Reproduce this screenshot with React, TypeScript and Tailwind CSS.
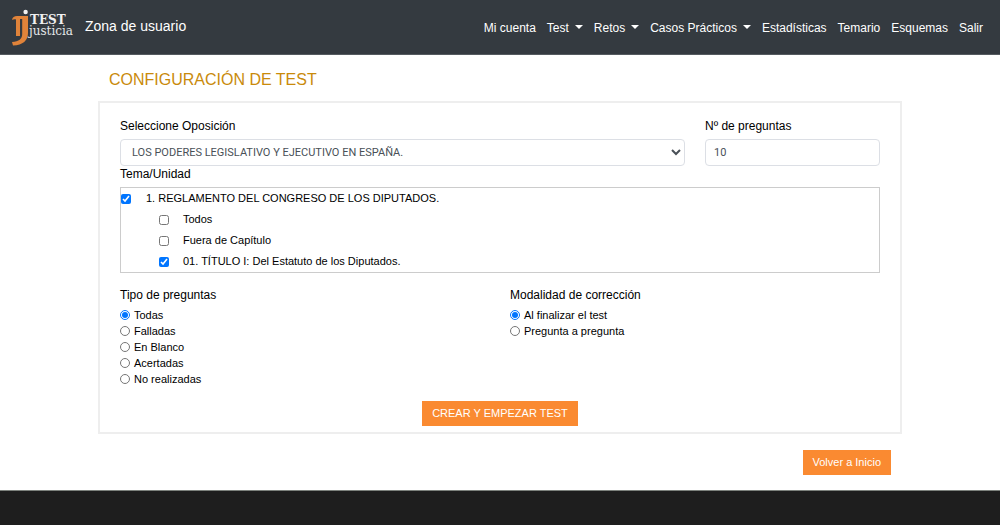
import { useState } from "react";

const MENU = [
  { label: "Mi cuenta", dropdown: false },
  { label: "Test", dropdown: true },
  { label: "Retos", dropdown: true },
  { label: "Casos Prácticos", dropdown: true },
  { label: "Estadísticas", dropdown: false },
  { label: "Temario", dropdown: false },
  { label: "Esquemas", dropdown: false },
  { label: "Salir", dropdown: false },
];

const CAPITULOS = [
  { id: "cap-todos", label: "Todos", checked: false },
  { id: "cap-fuera", label: "Fuera de Capítulo", checked: false },
  { id: "cap-01", label: "01. TÍTULO I: Del Estatuto de los Diputados.", checked: true },
];

const TIPOS = ["Todas", "Falladas", "En Blanco", "Acertadas", "No realizadas"];
const MODALIDADES = ["Al finalizar el test", "Pregunta a pregunta"];

function Logo() {
  return (
    <svg viewBox="0 0 64 40" className="w-16 h-10 shrink-0" role="img" aria-label="TEST justicia">
      <path
        d="M1 13 C1.6 10 3.2 9 6 9 H17 V26 C17 33.5 12 38 2 38.6 L1 35 C8 34.6 11.2 32 11.2 27 V12 H9 V29 H5 V12.4 C3.6 12 2.2 12.2 1 13 Z"
        fill="#e0833a"
      />
      <circle cx="14.6" cy="5" r="2.2" fill="#f1f1f1" />
      <text x="19" y="17" fontFamily="'DejaVu Serif', serif" fontSize="12" fontWeight="bold" fill="#f1f1f1">
        TEST
      </text>
      <text x="18" y="28" fontFamily="'DejaVu Serif', serif" fontSize="12" fill="#e4e6e8">
        justicia
      </text>
    </svg>
  );
}

function RadioGroup({ title, name, options }: { title: string; name: string; options: string[] }) {
  const [selected, setSelected] = useState(options[0]);

  return (
    <fieldset>
      <legend className="text-xs">{title}</legend>
      <div className="mt-1">
        {options.map((o) => (
          <label key={o} className="flex items-center gap-1 text-[11px] leading-4">
            <input
              type="radio"
              name={name}
              value={o}
              checked={selected === o}
              onChange={() => setSelected(o)}
              className="size-2.5 shrink-0"
            />
            {o}
          </label>
        ))}
      </div>
    </fieldset>
  );
}

export default function App() {
  const [preguntas, setPreguntas] = useState("10");

  return (
    <div className="min-h-screen flex flex-col bg-white text-black font-['Liberation_Sans',Arial,sans-serif]">
      {/* Navbar */}
      <header className="flex items-center justify-between bg-[#343a40] text-white pl-[11px] pr-[17px] py-[7px] border-b border-[#555b60]">
        <a href="#" className="flex items-center gap-2.5">
          <Logo />
          <span className="text-sm leading-5 pb-0.5">Zona de usuario</span>
        </a>
        <nav className="pt-0.5">
          <ul className="flex items-center gap-[11px] text-xs">
            {MENU.map((m) => (
              <li key={m.label}>
                <a href="#" className="flex items-center gap-1.5">
                  {m.label}
                  {m.dropdown && (
                    <span className="border-x-4 border-t-4 border-x-transparent border-t-white mb-0.5"></span>
                  )}
                </a>
              </li>
            ))}
          </ul>
        </nav>
      </header>

      <main className="w-full max-w-[804px] mx-auto pt-[13px] pb-[15px]">
        <h1 className="pl-[11px] text-base leading-6 text-[#c98a0b]">CONFIGURACIÓN DE TEST</h1>

        {/* Test form */}
        <form className="mt-[9px] border-2 border-[#eeeeee] px-5 pt-[15px] pb-1.5" onSubmit={(e) => e.preventDefault()}>
          <div className="grid grid-cols-4 gap-5">
            <div className="col-span-3">
              <label htmlFor="oposicion" className="block text-xs">
                Seleccione Oposición
              </label>
              <select
                id="oposicion"
                className="mt-[5px] w-full h-[27px] px-[7px] rounded border border-[#dcdfe5] bg-white text-[#495057] text-[11px] font-[Roboto,sans-serif]"
              >
                <option>LOS PODERES LEGISLATIVO Y EJECUTIVO EN ESPAÑA.</option>
              </select>
            </div>
            <div>
              <label htmlFor="preguntas" className="block text-xs">
                Nº de preguntas
              </label>
              <input
                id="preguntas"
                type="text"
                value={preguntas}
                onChange={(e) => setPreguntas(e.target.value)}
                className="mt-[5px] w-full h-[27px] px-2 rounded border border-[#dcdfe5] bg-white text-[#495057] text-[11px] font-[Roboto,sans-serif]"
              />
            </div>
          </div>

          <h2 className="text-xs">Tema/Unidad</h2>
          <div className="mt-[5px] border border-[#cccccc] text-[11px] leading-[21px]">
            <div className="flex items-center">
              <input id="tema-1" type="checkbox" defaultChecked className="size-2.5 shrink-0" />
              <label htmlFor="tema-1" className="pl-[15px]">
                1. REGLAMENTO DEL CONGRESO DE LOS DIPUTADOS.
              </label>
            </div>
            {CAPITULOS.map((c) => (
              <div key={c.id} className="flex items-center pl-[38px]">
                <input id={c.id} type="checkbox" defaultChecked={c.checked} className="size-2.5 shrink-0" />
                <label htmlFor={c.id} className="pl-3.5">
                  {c.label}
                </label>
              </div>
            ))}
          </div>

          <div className="mt-3.5 grid grid-cols-2 gap-5">
            <RadioGroup title="Tipo de preguntas" name="tipo" options={TIPOS} />
            <RadioGroup title="Modalidad de corrección" name="modalidad" options={MODALIDADES} />
          </div>

          <div className="mt-3.5 flex justify-center">
            <button type="submit" className="h-[25px] px-2.5 bg-[#fa8a31] text-white text-[11px]">
              CREAR Y EMPEZAR TEST
            </button>
          </div>
        </form>

        <div className="mt-4 pr-[11px] flex justify-end">
          <a href="#" className="h-[25px] px-2.5 flex items-center bg-[#fa8a31] text-white text-[11px]">
            Volver a Inicio
          </a>
        </div>
      </main>

      <footer className="grow min-h-8 bg-[#1e1e1e] border-t border-[#7d827d]"></footer>
    </div>
  );
}
